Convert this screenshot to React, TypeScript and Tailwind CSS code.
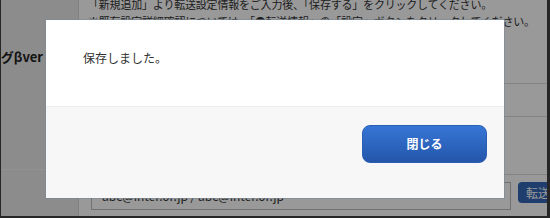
export default function App() {
  const jp = "font-['Noto_Sans_CJK_JP','Noto_Sans',sans-serif]";
  return (
    <div className={`relative w-[550px] h-[218px] overflow-hidden bg-[#262626] ${jp}`}>
      <div className="absolute left-[1px] top-0 w-[546px] h-[216px] overflow-hidden bg-white">
        {/* underlying page */}
        <div className="grid grid-cols-[78px_1fr] h-full">
          <div className="flex flex-col bg-[#e9e9e9] border-r border-[#d8d8d8]">
            <div className="h-[170px] border-b border-[#f4f4f4] flex items-center justify-end overflow-hidden pr-[35px] pb-[56px]">
              <span className="whitespace-nowrap text-[13px] font-bold text-[#222]">転送設定ログβver</span>
            </div>
            <div className="flex-1" />
          </div>
          <div className="flex flex-col">
            <div className="h-[88px] border-b border-[#dadada] pl-[9px] -mt-[4px] text-[11px] leading-[17px] text-[#333] whitespace-nowrap tracking-[-0.2px]">
              <p>「新規追加」より転送設定情報をご入力後、「保存する」をクリックしてください。</p>
              <p>※既存設定詳細確認については、「●転送情報」の「設定」ボタンをクリックしてください。</p>
            </div>
            <div className="h-[33px] border-b border-[#dadada]" />
            <div className="h-[58px] border-b border-[#dadada]" />
            <div className="flex-1 flex items-start gap-[7px] pt-[7px] pl-[12px]">
              <div className="w-[420px] h-[28px] border border-[#bdbdbd] bg-white px-[10px] text-[12px] leading-[26px] text-[#333] whitespace-nowrap">
                abc@inter.or.jp / abc@inter.or.jp
              </div>
              <div className="h-[21px] px-[8px] rounded-[4px] bg-[#3468b8] text-white text-[12px] leading-[21px] whitespace-nowrap">
                転送
              </div>
            </div>
          </div>
        </div>

        {/* overlay */}
        <div className="absolute inset-0 bg-black/40" />

        {/* modal */}
        <div className="absolute left-[45px] top-[20px] w-[458px] h-[178px] flex flex-col bg-white shadow-[0_0_0_1px_rgba(120,135,150,0.55)]">
          <div className="h-[86px] flex items-start pt-[28px] pl-[37px]">
            <span className="text-[12px] leading-[20px] text-[#333]">保存しました。</span>
          </div>
          <div className="flex-1 bg-[#f7f7f7] border-t border-[#efefef] flex items-start justify-end pt-[18px] pr-[17px]">
            <button className="w-[125px] h-[38px] rounded-[8px] bg-linear-to-b from-[#3676d6] to-[#2456aa] border border-[#2b5fb5] text-white text-[12px] font-bold">
              閉じる
            </button>
          </div>
        </div>
      </div>
    </div>
  );
}
